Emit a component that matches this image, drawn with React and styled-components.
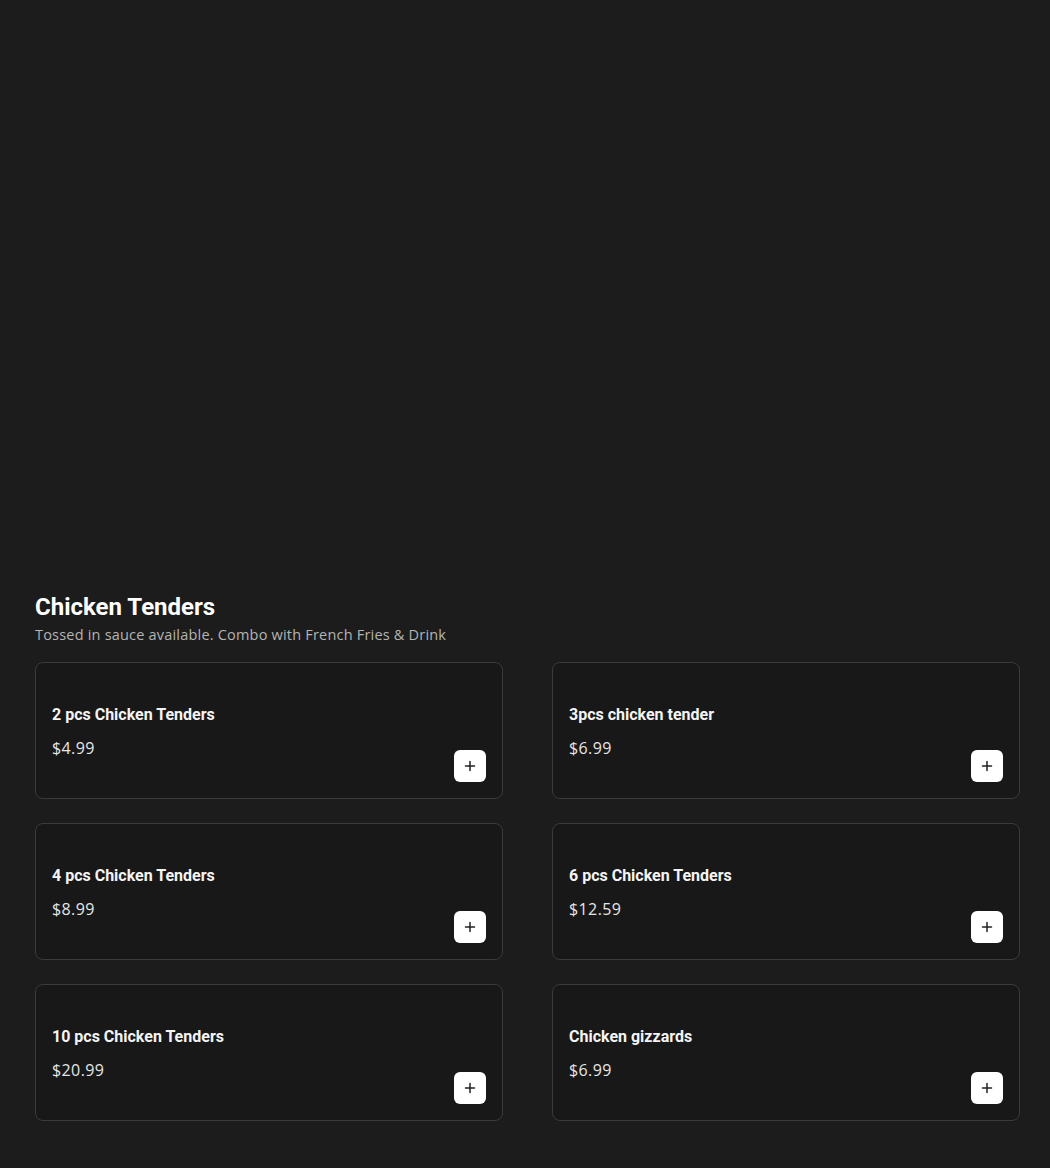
import React from 'react';
import styled, { createGlobalStyle } from 'styled-components';

const GlobalStyle = createGlobalStyle`
    html, body {
        margin: 0;
        padding: 0;
        background: #1c1c1c;
    }
    body {
        font-family: Roboto, "Liberation Sans", sans-serif;
        color: #fff;
    }
`;

const items = [
    { name: '2 pcs Chicken Tenders', price: '$4.99' },
    { name: '3pcs chicken tender', price: '$6.99' },
    { name: '4 pcs Chicken Tenders', price: '$8.99' },
    { name: '6 pcs Chicken Tenders', price: '$12.59' },
    { name: '10 pcs Chicken Tenders', price: '$20.99' },
    { name: 'Chicken gizzards', price: '$6.99' },
];

const App = () => {
    return (
        <Page>
            <GlobalStyle />
            <Spacer />
            <Section>
                <SectionTitle>Chicken Tenders</SectionTitle>
                <SectionDesc>Tossed in sauce available. Combo with French Fries &amp; Drink</SectionDesc>
                <Grid>
                    {items.map((item) => (
                        <Card key={item.name}>
                            <CardBody>
                                <ItemName>{item.name}</ItemName>
                                <ItemPrice>{item.price}</ItemPrice>
                            </CardBody>
                            <AddButton aria-label="Add">
                                <svg width="12" height="12" viewBox="0 0 12 12">
                                    <path d="M6 1.5v9M1.5 6h9" stroke="#222" strokeWidth="1.5" strokeLinecap="round" />
                                </svg>
                            </AddButton>
                        </Card>
                    ))}
                </Grid>
            </Section>
        </Page>
    );
};

export default App;

const Page = styled.div`
    min-height: 1168px;
    background: #1c1c1c;
`;

const Spacer = styled.div`
    height: 591px;
`;

const Section = styled.section`
    padding: 0 30px 40px 35px;
`;

const SectionTitle = styled.h2`
    margin: 0;
    font-size: 24px;
    line-height: 32px;
    font-weight: 700;
    color: #fff;
`;

const SectionDesc = styled.p`
    margin: 2px 0 17px;
    font-family: "Open Sans", "Liberation Sans", sans-serif;
    font-size: 14.5px;
    line-height: 20px;
    letter-spacing: 0.2px;
    color: #b4b4b4;
`;

const Grid = styled.div`
    display: grid;
    grid-template-columns: 468px 468px;
    column-gap: 49px;
    row-gap: 24px;
`;

const Card = styled.div`
    display: flex;
    align-items: flex-end;
    justify-content: space-between;
    height: 137px;
    box-sizing: border-box;
    padding: 0 16px 16px 16px;
    background: #181818;
    border: 1px solid #3b3b3b;
    border-radius: 8px;
`;

const CardBody = styled.div`
    display: flex;
    flex-direction: column;
    gap: 9px;
    padding-bottom: 22px;
`;

const ItemName = styled.h3`
    margin: 0;
    font-size: 16px;
    line-height: 24px;
    font-weight: 700;
    color: #f4f4f4;
`;

const ItemPrice = styled.div`
    font-family: "Open Sans", "Liberation Sans", sans-serif;
    font-size: 16px;
    line-height: 24px;
    letter-spacing: 0.4px;
    color: #e6e6e6;
`;

const AddButton = styled.button`
    display: flex;
    align-items: center;
    justify-content: center;
    width: 32px;
    height: 32px;
    padding: 0;
    border: none;
    border-radius: 6px;
    background: #fff;
    cursor: pointer;
`;
